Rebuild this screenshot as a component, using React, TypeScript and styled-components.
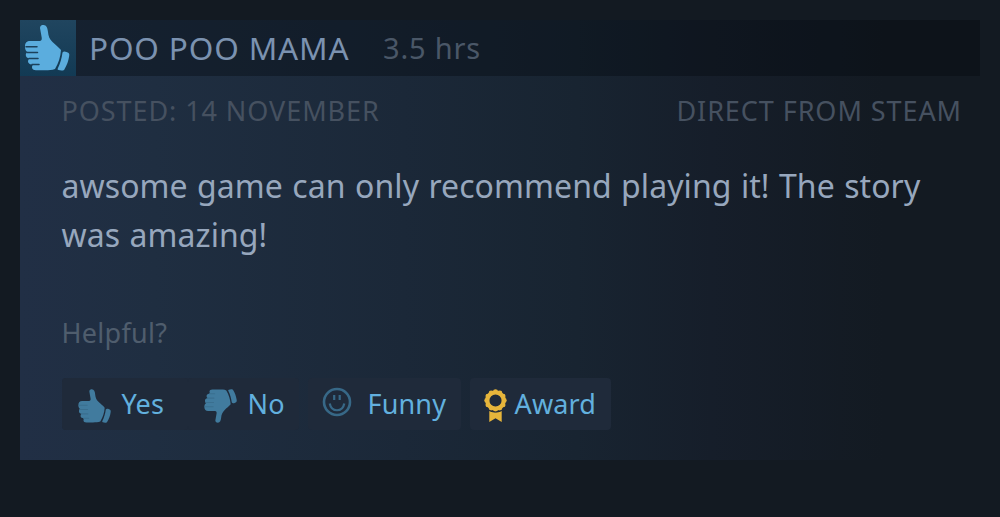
import React from 'react';
import styled, { createGlobalStyle } from 'styled-components';

const COLORS = {
  page: '#131a22',
  name: '#7b92b0',
  muted: '#4a5767',
  body: '#97a7bd',
  link: '#62b0de',
  icon: '#417b9e',
  smile: '#376887',
  award: '#e6b53b',
  button: '#1f2a3a',
};

const GlobalStyle = createGlobalStyle`
  body {
    margin: 0;
    background-color: ${COLORS.page};
    font-family: 'Noto Sans', 'Open Sans', sans-serif;
  }
`;

const Page = styled.main`
  box-sizing: border-box;
  height: 517px;
  padding: 20px 20px 0;
`;

const Card = styled.article`
  height: 440px;
  background: linear-gradient(
    to right,
    #212f45 0%,
    #1f2e41 14%,
    #1b2838 40%,
    #182431 58%,
    #161e2a 72%,
    #131a22 90%
  );
`;

const Header = styled.header`
  display: flex;
  align-items: center;
  height: 56px;
  background-color: rgba(3, 8, 14, 0.36);
`;

const Rating = styled.div`
  width: 56px;
  height: 56px;
  flex: none;
  background: linear-gradient(#20455f, #123a54);
  color: #5badde;
`;

const Name = styled.span`
  margin-left: 13px;
  width: 294px;
  font-size: 31.5px;
  line-height: 56px;
  white-space: nowrap;
  letter-spacing: 0.85px;
  color: ${COLORS.name};
`;

const Hours = styled.span`
  font-size: 29px;
  line-height: 58px;
  white-space: nowrap;
  letter-spacing: 0.8px;
  color: ${COLORS.muted};
`;

const Content = styled.div`
  padding: 0 18px 0 41.5px;
`;

const Meta = styled.div`
  display: flex;
  justify-content: space-between;
  padding-top: 15px;
  font-size: 27px;
  line-height: 40px;
  white-space: nowrap;
  letter-spacing: 0.93px;
  color: #465160;
`;

const Text = styled.p`
  margin: 30px 0 0;
  font-size: 32px;
  line-height: 49px;
  white-space: nowrap;
  letter-spacing: 0.07px;
  word-spacing: 1px;
  color: ${COLORS.body};
`;

const Helpful = styled.div`
  margin-top: 54px;
  font-size: 27px;
  line-height: 40px;
  letter-spacing: 0.3px;
  color: #4f5d6d;
`;

const Actions = styled.div`
  display: flex;
  gap: 9px;
  margin-top: 25px;
`;

const ButtonGroup = styled.div`
  display: flex;
  width: 237px;
  border-radius: 4px;
  background-color: ${COLORS.button};
`;

const Button = styled.button<{ $width: number; $gap: number; $left: number }>`
  box-sizing: border-box;
  display: flex;
  align-items: center;
  gap: ${({ $gap }) => $gap}px;
  width: ${({ $width }) => $width}px;
  height: 52px;
  padding: 0 0 0 ${({ $left }) => $left}px;
  border: 0;
  border-radius: 4px;
  background-color: ${COLORS.button};
  font-family: inherit;
  font-size: 27px;
  line-height: 52px;
  white-space: nowrap;
  letter-spacing: 0.15px;
  color: ${COLORS.link};
  cursor: pointer;

  svg {
    flex: none;
  }
`;

const ButtonIcon = styled.span<{ $flipped?: boolean }>`
  display: flex;
  margin-top: 3px;
  color: ${COLORS.icon};
  transform: ${({ $flipped }) => ($flipped ? 'scaleY(-1)' : 'none')};
`;

const SmileIcon = styled.svg`
  margin-bottom: 5px;
  color: ${COLORS.smile};
`;

type ThumbProps = { size: number; viewBox: string; line: string };

const Thumb: React.FC<ThumbProps> = ({ size, viewBox, line }) => (
  <svg width={size} height={size} viewBox={viewBox} display="block">
    <path
      fill="currentColor"
      d="M20 8 C20 5.5 22 5 23.5 5 C26.5 5 27.6 8 28 12 C28.3 16 29.5 19 32.5 22 C35.5 25 38.5 27 41 30 C40.5 37 38.5 43 35 49 C32 50.2 29 50.2 25 50.2 H16 C13.5 50.2 12 49 12 47.5 C12 46 12.5 45.3 13 44.7 C10 44.5 8 43.5 8 41.5 C8 40 8.8 39 9.5 38.5 C7 38 5.8 37 5.8 35 C5.8 33.5 6.5 32.5 7.5 32 C5.8 31 5 29.5 5 26.5 C5 22.5 7 21 10 21 H19.5 C21.5 21 22 19.5 21.7 17.5 Z"
    />
    <path
      fill="currentColor"
      d="M42.5 32.5 C43.5 31 45 31.3 46.5 32 L48.3 32.8 C49.5 33.5 49.4 35 49.1 36.5 C48.4 41 47 45 44.5 49.2 C43.8 50.6 42.5 50.7 41.5 50.5 L38.5 50 C37.5 49.8 37.4 49 38 48 C40.2 43.5 41.7 38.5 42.5 32.5 Z"
    />
    <path
      d="M6 26.8 H17 M7 32.5 H17.5 M9 38.5 H18 M12 44.5 H19"
      fill="none"
      stroke={line}
      strokeWidth="1.5"
      strokeLinecap="round"
    />
  </svg>
);

const Smile: React.FC = () => (
  <SmileIcon width="30" height="30" viewBox="0 0 30 30" fill="none" stroke="currentColor">
    <circle cx="15" cy="15" r="13" strokeWidth="2.6" />
    <path d="M12.2 8 V13 M17.7 8 V13" strokeWidth="2.2" />
    <path d="M7.7 16.5 C9.5 25.5 20.5 25.5 22.3 16.5" strokeWidth="2.2" />
  </SmileIcon>
);

const scallops = Array.from({ length: 12 }, (_, i) => (i * Math.PI) / 6);

const Ribbon: React.FC = () => (
  <svg width="24" height="34" viewBox="0 0 24 34" fill={COLORS.award}>
    {scallops.map((angle) => (
      <circle
        key={angle}
        cx={11.5 + 8.8 * Math.cos(angle)}
        cy={11.5 + 8.8 * Math.sin(angle)}
        r="2.4"
      />
    ))}
    <circle cx="11.5" cy="11.5" r="8.2" fill="none" stroke={COLORS.award} strokeWidth="4.2" />
    <path d="M5.3 21.5 C8 23.8 15 23.8 17.7 21.5 V33 L11.5 29.3 L5.3 33 Z" />
    <path d="M5 21.4 C8.5 23.6 14.5 23.6 18 21.4" fill="none" stroke={COLORS.button} strokeWidth="1" />
  </svg>
);

const App: React.FC = () => {
  return (
    <Page>
      <GlobalStyle />
      <Card>
        <Header>
          <Rating>
            <Thumb size={56} viewBox="0 0 56 56" line="#1c415b" />
          </Rating>
          <Name>POO POO MAMA</Name>
          <Hours>3.5 hrs</Hours>
        </Header>
        <Content>
          <Meta>
            <span>POSTED: 14 NOVEMBER</span>
            <span>DIRECT FROM STEAM</span>
          </Meta>
          <Text>
            awsome game can only recommend playing it! The story
            <br />
            was amazing!
          </Text>
          <Helpful>Helpful?</Helpful>
          <Actions>
            <ButtonGroup>
              <Button $width={126} $left={16} $gap={10}>
                <ButtonIcon>
                  <Thumb size={34} viewBox="4.5 4.5 46.5 46.5" line="#3a6f8f" />
                </ButtonIcon>
                Yes
              </Button>
              <Button $width={111} $left={16} $gap={10}>
                <ButtonIcon $flipped>
                  <Thumb size={34} viewBox="4.5 4.5 46.5 46.5" line="#3a6f8f" />
                </ButtonIcon>
                No
              </Button>
            </ButtonGroup>
            <Button $width={153} $left={14} $gap={16}>
              <Smile />
              Funny
            </Button>
            <Button $width={141} $left={14} $gap={7}>
              <ButtonIcon>
                <Ribbon />
              </ButtonIcon>
              Award
            </Button>
          </Actions>
        </Content>
      </Card>
    </Page>
  );
};

export default App;
